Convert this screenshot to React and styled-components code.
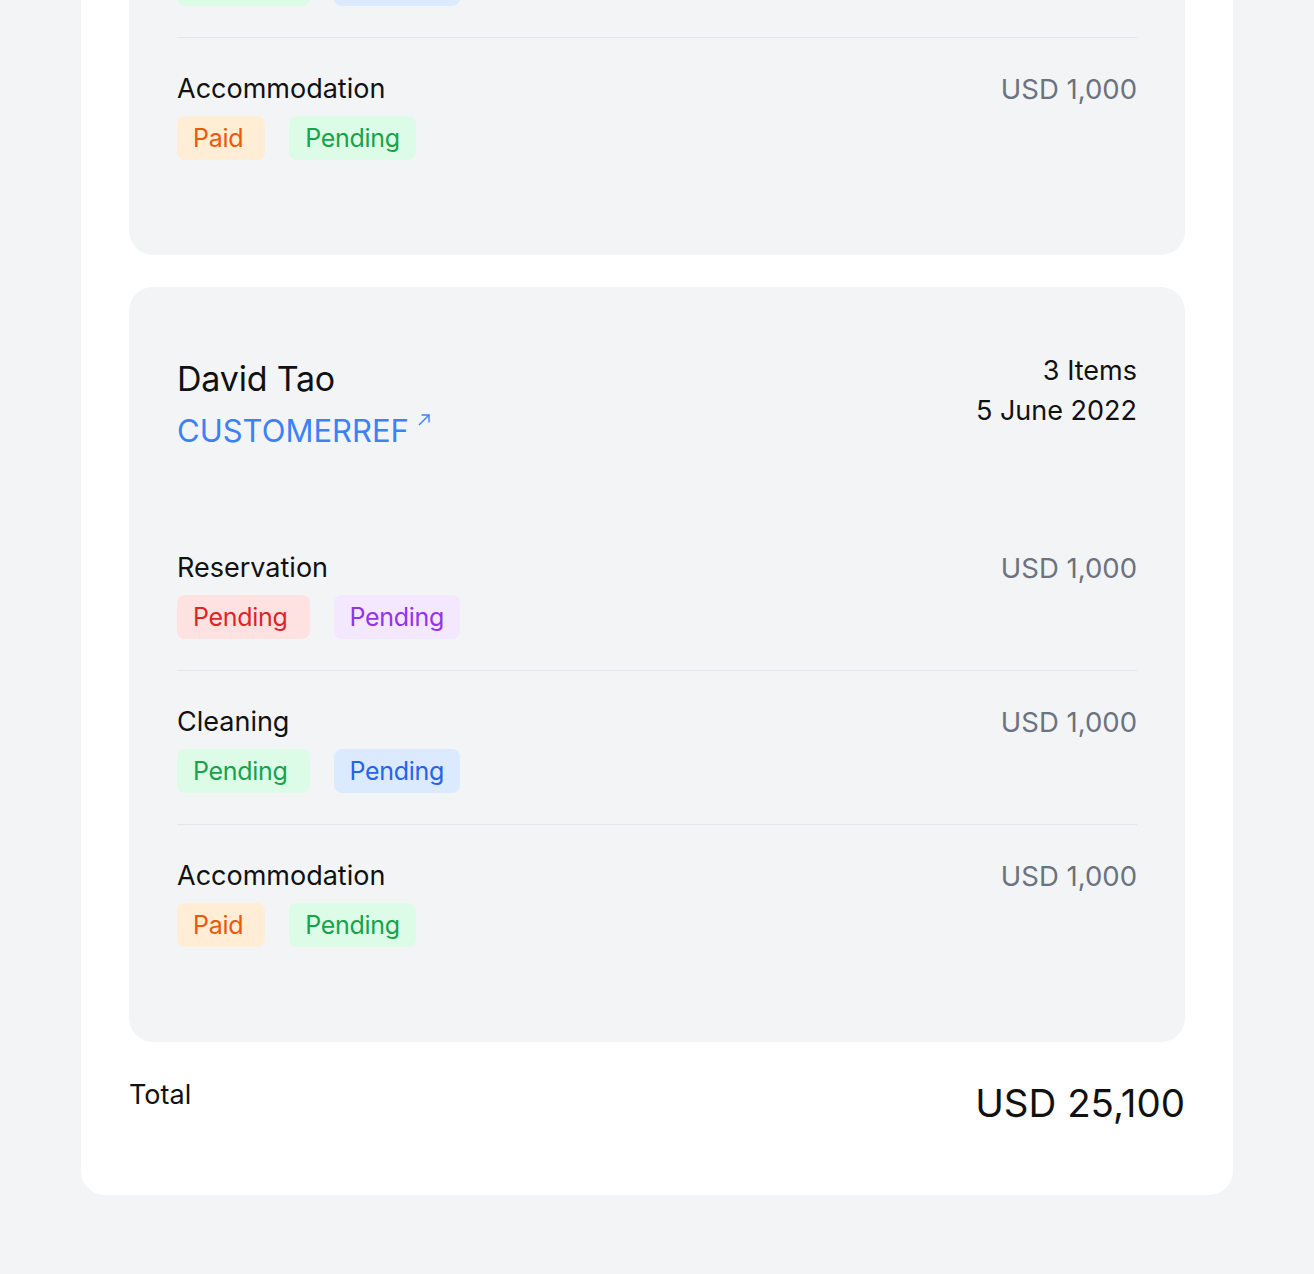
import styled, { createGlobalStyle } from "styled-components";

const Global = createGlobalStyle`
    html, body {
        margin: 0;
        padding: 0;
        background-color: #F3F4F6;
        font-family: Inter, "Noto Sans", "Liberation Sans", sans-serif;
        color: #111111;
    }
    * { box-sizing: border-box; }
`;

const Page = styled.div`
    width: 100%;
    min-height: 1274px;
    overflow: hidden;
    background-color: #F3F4F6;
    padding-bottom: 81px;
`;

// page is shown scrolled part-way down, the panel starts above the viewport
const Panel = styled.div`
    max-width: 1152px;
    margin: -548px auto 0;
    background-color: #FFFFFF;
    border-radius: 24px;
    padding: 48px 48px 64px;
    display: flex;
    flex-direction: column;
    gap: 32px;
`;

const Booking = styled.div`
    background-color: #F3F4F6;
    border-radius: 24px;
    padding: 64px 48px;
    display: flex;
    flex-direction: column;
`;

const Head = styled.div`
    display: flex;
    justify-content: space-between;
    align-items: flex-start;
    margin-bottom: 62px;
`;

const Name = styled.div`
    font-size: 34px;
    line-height: 56px;
    letter-spacing: -0.2px;
    color: #111111;
`;

const Ref = styled.a`
    display: inline-flex;
    align-items: flex-start;
    gap: 8px;
    font-size: 31px;
    line-height: 48px;
    color: #3B82F6;
    text-decoration: none;
`;

const Meta = styled.div`
    text-align: right;
    font-size: 27px;
    line-height: 40px;
    color: #111111;
`;

const Item = styled.div`
    display: flex;
    justify-content: space-between;
    align-items: flex-start;
    padding: 31px 0;
    & + & {
        border-top: 1px solid #E3E5E9;
    }
`;

const ItemName = styled.div`
    font-size: 27px;
    line-height: 40px;
    color: #111111;
`;

const Amount = styled.div`
    font-size: 27.5px;
    line-height: 40px;
    color: #6B7280;
`;

const Badges = styled.div`
    display: flex;
    gap: 24px;
    margin-top: 7px;
`;

const Badge = styled.span`
    display: inline-block;
    font-size: 25px;
    line-height: 40px;
    letter-spacing: -0.3px;
    padding: 2px ${p => (p.$first ? "22px" : "16px")} 2px 16px;
    border-radius: 8px;
    background-color: ${p => p.$bg};
    color: ${p => p.$fg};
`;

const TotalRow = styled.div`
    display: flex;
    justify-content: space-between;
    align-items: flex-start;
    margin-top: 1px;
`;

const TotalLabel = styled.div`
    font-size: 27px;
    line-height: 40px;
    color: #111111;
`;

const TotalValue = styled.div`
    font-size: 38.5px;
    line-height: 56px;
    color: #111111;
`;

const tones = {
    orange: { bg: "#FFEDD5", fg: "#EA580C" },
    green: { bg: "#DCFCE7", fg: "#16A34A" },
    red: { bg: "#FEE2E2", fg: "#DC2626" },
    purple: { bg: "#F3E8FF", fg: "#9333EA" },
    blue: { bg: "#DBEAFE", fg: "#2563EB" },
};

const items = [
    { name: "Reservation", amount: "USD 1,000", badges: [["Pending", "red"], ["Pending", "purple"]] },
    { name: "Cleaning", amount: "USD 1,000", badges: [["Pending", "green"], ["Pending", "blue"]] },
    { name: "Accommodation", amount: "USD 1,000", badges: [["Paid", "orange"], ["Pending", "green"]] },
];

function LinkArrow() {
    return (
        <svg width="14" height="14" viewBox="0 0 14 14" fill="none" stroke="#3B82F6" strokeWidth="1.4" style={{ marginTop: 6 }}>
            <path d="M2 12 L12 2" />
            <path d="M4.5 2 H12 V9.5" />
        </svg>
    );
}

function BookingCard({ name, reference, count, date }) {
    return (
        <Booking>
            <Head>
                <div>
                    <Name>{name}</Name>
                    <Ref href="#">{reference}<LinkArrow /></Ref>
                </div>
                <Meta>
                    <div>{count}</div>
                    <div>{date}</div>
                </Meta>
            </Head>
            <div>
                {items.map((it, i) => (
                    <Item key={i}>
                        <div>
                            <ItemName>{it.name}</ItemName>
                            <Badges>
                                {it.badges.map(([label, tone], j) => (
                                    <Badge key={j} $first={j === 0} $bg={tones[tone].bg} $fg={tones[tone].fg}>{label}</Badge>
                                ))}
                            </Badges>
                        </div>
                        <Amount>{it.amount}</Amount>
                    </Item>
                ))}
            </div>
        </Booking>
    );
}

export default function App() {
    return (
        <Page>
            <Global />
            <Panel>
                <BookingCard name="David Tao" reference="CUSTOMERREF" count="3 Items" date="5 June 2022" />
                <BookingCard name="David Tao" reference="CUSTOMERREF" count="3 Items" date="5 June 2022" />
                <TotalRow>
                    <TotalLabel>Total</TotalLabel>
                    <TotalValue>USD 25,100</TotalValue>
                </TotalRow>
            </Panel>
        </Page>
    );
}
